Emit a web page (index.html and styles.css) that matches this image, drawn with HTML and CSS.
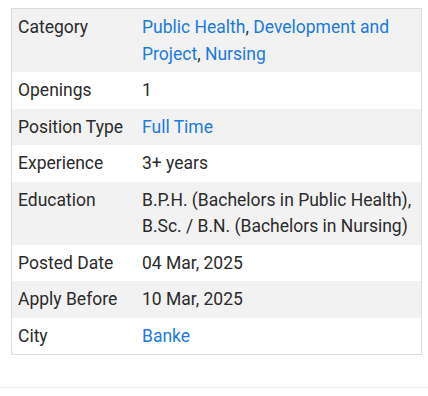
FILE: index.html
```html
<!DOCTYPE html>
<html>
<head>
<meta charset="utf-8">
<link rel="stylesheet" href="styles.css">
</head>
<body>
<div class="wrap">
  <table class="details">
    <tr><td class="label">Category</td><td class="value"><a href="#">Public Health</a>, <a href="#">Development and Project</a>, <a href="#">Nursing</a></td></tr>
    <tr><td class="label">Openings</td><td class="value">1</td></tr>
    <tr><td class="label">Position Type</td><td class="value"><a href="#">Full Time</a></td></tr>
    <tr><td class="label">Experience</td><td class="value">3+ years</td></tr>
    <tr><td class="label">Education</td><td class="value">B.P.H. (Bachelors in Public Health), B.Sc. / B.N. (Bachelors in Nursing)</td></tr>
    <tr><td class="label">Posted Date</td><td class="value">04 Mar, 2025</td></tr>
    <tr><td class="label">Apply Before</td><td class="value">10 Mar, 2025</td></tr>
    <tr><td class="label">City</td><td class="value"><a href="#">Banke</a></td></tr>
  </table>
</div>
<div class="rule"></div>
</body>
</html>
```
FILE: styles.css
```css
html, body {
  margin: 0;
  padding: 0;
  background: #fff;
}
body {
  font-family: Roboto, "Liberation Sans", sans-serif;
  font-size: 17.5px;
  color: #2b2b2b;
}
.wrap {
  padding: 8px 6px 0 11px;
}
.details {
  width: 411px;
  border-collapse: collapse;
  border: 1px solid #dcdcdc;
}
.details td {
  padding: 5px 6px;
  line-height: 26.5px;
  vertical-align: top;
}
.details tr:nth-child(odd) td {
  background: #f2f2f2;
}
.details .label {
  width: 118px;
  padding-right: 0;
  white-space: nowrap;
}
.details a {
  color: #1a7ae0;
  text-decoration: none;
}
.rule {
  margin-top: 32px;
  border-top: 1px solid #ececec;
}
```
